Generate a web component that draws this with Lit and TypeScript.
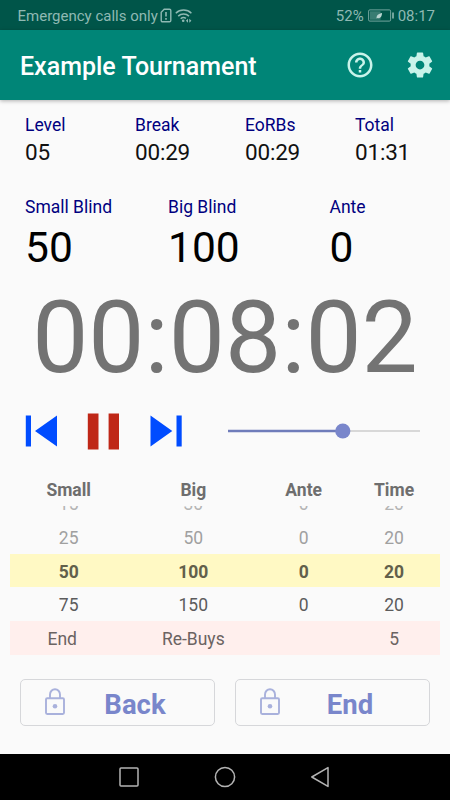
import { LitElement, html, css, svg } from "lit";
import { customElement } from "lit/decorators.js";
import { classMap } from "lit/directives/class-map.js";

interface Level {
  small: string;
  big: string;
  ante: string;
  time: string;
  kind: string;
}

const LEVELS: Level[] = [
  { small: "15", big: "30", ante: "0", time: "20", kind: "oldest" },
  { small: "25", big: "50", ante: "0", time: "20", kind: "past" },
  { small: "50", big: "100", ante: "0", time: "20", kind: "current" },
  { small: "75", big: "150", ante: "0", time: "20", kind: "next" },
  { small: "End", big: "Re-Buys", ante: "", time: "5", kind: "rest" },
];

const lock = svg`
  <path d="M6 10.5V6.5a5 5.3 0 0 1 10 0v4" fill="none" stroke="currentColor" stroke-width="1.9"/>
  <rect x="2" y="10.3" width="18" height="15.7" rx="1.2" fill="none" stroke="currentColor" stroke-width="1.9"/>
  <circle cx="11" cy="18.2" r="2.3" fill="currentColor"/>`;

@customElement("app-root")
export class AppRoot extends LitElement {
  static styles = css`
    :host {
      display: flex;
      flex-direction: column;
      width: 450px;
      height: 800px;
      overflow: hidden;
      background: #fafafa;
      font-family: Roboto, "Liberation Sans", sans-serif;
      color: #000;
    }
    * { box-sizing: border-box; }
    svg { display: block; flex: none; }
    .status {
      height: 30px;
      flex: none;
      display: flex;
      align-items: center;
      padding: 1px 15px 0 17.5px;
      background: #005549;
      color: #8fb9b3;
      font-size: 15px;
      line-height: 28px;
      white-space: nowrap;
    }
    .sim { margin-left: 2px; }
    .wifi { margin-left: 3px; }
    .pct { margin-left: auto; }
    .batt { margin: 0 3px 0 4px; }
    .bar {
      height: 70px;
      flex: none;
      display: flex;
      align-items: center;
      padding: 0 15px 0 20px;
      background: #008577;
      color: #fff;
      box-shadow: 0 1px 4px rgba(0, 0, 0, 0.3);
    }
    .title {
      flex: 1;
      font-size: 25px;
      font-weight: 500;
      line-height: 32px;
      padding-top: 4px;
    }
    .bar svg { color: #c9f3ea; }
    .gear { margin-left: 30px; }
    .stats {
      display: grid;
      grid-template-columns: repeat(4, 110px);
      padding: 13.3px 0 0 25px;
      height: 95.3px;
      flex: none;
    }
    .blinds {
      display: grid;
      grid-template-columns: 143px 161.5px 100px;
      padding-left: 25px;
      height: 80.5px;
      flex: none;
    }
    .label { font-size: 17.5px; line-height: 24px; color: #000080; }
    .value { font-size: 22.5px; line-height: 30px; color: #111; }
    .stats .value { letter-spacing: -0.2px; }
    .blinds .value { font-size: 42.5px; line-height: 57px; color: #000; }
    .timer {
      font-size: 100px;
      line-height: 124px;
      height: 124px;
      flex: none;
      text-align: center;
      color: #737373;
      white-space: nowrap;
    }
    .controls {
      display: flex;
      align-items: center;
      height: 62.5px;
      flex: none;
      padding-left: 25px;
    }
    .pause { margin: 0 31px 0 30px; }
    .slider { margin-left: 44.7px; }
    .row {
      display: grid;
      grid-template-columns: 117.4px 131.8px 89px 91.8px;
      margin: 0 10px;
      height: 33.75px;
      flex: none;
      line-height: 36px;
      text-align: center;
      font-size: 17.5px;
      color: #5c5c5c;
    }
    .head {
      height: 28px;
      line-height: 29px;
      margin-top: 13.7px;
      font-weight: 700;
      color: #6e6e6e;
    }
    .levels {
      display: flex;
      flex-direction: column;
      justify-content: flex-end;
      height: 149px;
      margin-top: 2px;
      flex: none;
      overflow: hidden;
    }
    .oldest { color: #b4b4b4; }
    .past { color: #a0a0a0; }
    .current { background: #fff9c4; color: #62604b; font-weight: 700; }
    .rest { background: #ffefed; color: #6b6362; }
    .rest .first { padding-right: 13px; }
    .buttons {
      display: flex;
      gap: 20px;
      padding: 24.5px 20px 0;
      flex: 1;
    }
    .button {
      width: 195px;
      height: 46.5px;
      display: flex;
      align-items: center;
      padding-left: 23px;
      border: 1px solid #d6d7da;
      border-radius: 5px;
      color: #7986cb;
      font-size: 27.5px;
      font-weight: 700;
      line-height: 46px;
    }
    .button svg { color: #a9b1dc; margin-top: -1px; }
    .caption { width: 138px; text-align: center; padding-top: 4px; }
    .nav {
      height: 46.5px;
      flex: none;
      display: flex;
      align-items: center;
      justify-content: center;
      gap: 74px;
      background: #000;
    }
  `;

  private stat(label: string, value: string) {
    return html`<div><div class="label">${label}</div><div class="value">${value}</div></div>`;
  }

  private button(text: string) {
    return html`<div class="button">
      <svg width="22" height="28" viewBox="0 0 22 28">${lock}</svg>
      <div class="caption">${text}</div>
    </div>`;
  }

  render() {
    return html`
      <div class="status">
        <span>Emergency calls only</span>
        <svg class="sim" width="12" height="15" viewBox="0 0 12 15" fill="none" stroke="currentColor">
          <path d="M4.2 1.2H9.5a1.3 1.3 0 0 1 1.3 1.3v10a1.3 1.3 0 0 1-1.3 1.3h-7a1.3 1.3 0 0 1-1.3-1.3V4.2z" stroke-width="1.4"/>
          <path d="M6 4v4.6M6 10v1.7" stroke-width="1.6"/>
        </svg>
        <svg class="wifi" width="18" height="15" viewBox="0 0 18 15" fill="none" stroke="currentColor" stroke-width="1.5">
          <path d="M.8 5.2a11.3 11.3 0 0 1 15.6 0M3.2 8.1a7.8 7.8 0 0 1 10.8 0M5.7 10.8a4.3 4.3 0 0 1 5.2-.5"/>
          <circle cx="8.2" cy="12.8" r="1.3" fill="currentColor" stroke="none"/>
          <path d="M13 10.7 10.9 12.7 13 14.7zM14.3 10.7l2.1 2-2.1 2z" fill="currentColor" stroke="none"/>
        </svg>
        <span class="pct">52%</span>
        <svg class="batt" width="27" height="13" viewBox="0 0 27 13">
          <rect x=".6" y=".9" width="22" height="11.2" rx="1.2" fill="none" stroke="currentColor" stroke-opacity=".8"/>
          <rect x="2" y="2.3" width="10.5" height="8.4" fill="currentColor" opacity=".4"/>
          <path d="M8.6 9.6c-.4-3.2 2-4.9 5.5-5.6-.2 3.4-1.4 5.6-4.5 5.1z" fill="#b9d5d1"/>
          <path d="M24.2 3.5h1.6v6h-1.6z" fill="currentColor"/>
        </svg>
        <span>08:17</span>
      </div>
      <div class="bar">
        <div class="title">Example Tournament</div>
        <svg width="30" height="30" viewBox="0 0 24 24" fill="currentColor">
          <path d="M11 18h2v-2h-2v2zm1-16C6.48 2 2 6.48 2 12s4.48 10 10 10 10-4.48 10-10S17.52 2 12 2zm0 18c-4.41 0-8-3.59-8-8s3.59-8 8-8 8 3.59 8 8-3.59 8-8 8zm0-14c-2.21 0-4 1.79-4 4h2c0-1.1.9-2 2-2s2 .9 2 2c0 2-3 1.75-3 5h2c0-2.25 3-2.5 3-5 0-2.21-1.79-4-4-4z"/>
        </svg>
        <svg class="gear" width="30" height="30" viewBox="0 0 24 24" fill="currentColor">
          <path d="M19.43 12.98c.04-.32.07-.64.07-.98s-.03-.66-.07-.98l2.11-1.65c.19-.15.24-.42.12-.64l-2-3.46c-.12-.22-.39-.3-.61-.22l-2.49 1c-.52-.4-1.08-.73-1.69-.98l-.38-2.65C14.46 2.18 14.25 2 14 2h-4c-.25 0-.46.18-.49.42l-.38 2.65c-.61.25-1.17.59-1.69.98l-2.49-1c-.23-.09-.49 0-.61.22l-2 3.46c-.13.22-.07.49.12.64l2.11 1.65c-.04.32-.07.65-.07.98s.03.66.07.98l-2.11 1.65c-.19.15-.24.42-.12.64l2 3.46c.12.22.39.3.61.22l2.49-1c.52.4 1.08.73 1.69.98l.38 2.65c.03.24.24.42.49.42h4c.25 0 .46-.18.49-.42l.38-2.65c.61-.25 1.17-.59 1.69-.98l2.49 1c.23.09.49 0 .61-.22l2-3.46c.12-.22.07-.49-.12-.64l-2.11-1.65zM12 15.5c-1.93 0-3.5-1.57-3.5-3.5s1.57-3.5 3.5-3.5 3.5 1.57 3.5 3.5-1.57 3.5-3.5 3.5z"/>
        </svg>
      </div>
      <div class="stats">
        ${this.stat("Level", "05")} ${this.stat("Break", "00:29")}
        ${this.stat("EoRBs", "00:29")} ${this.stat("Total", "01:31")}
      </div>
      <div class="blinds">
        ${this.stat("Small Blind", "50")} ${this.stat("Big Blind", "100")} ${this.stat("Ante", "0")}
      </div>
      <div class="timer">00:08:02</div>
      <div class="controls">
        <svg width="32" height="32" viewBox="0 0 32 32" fill="#004cff"><path d="M.8.5h5.2v31H.8zM32 .5v31L10 16z"/></svg>
        <svg class="pause" width="32" height="37" viewBox="0 0 32 37" fill="#bf2717"><path d="M.8.5h10.7v36H.8zM21.6.5H32v36H21.6z"/></svg>
        <svg width="32" height="32" viewBox="0 0 32 32" fill="#004cff"><path d="M.5.5v31L22.3 16zM26.5.5h5.2v31h-5.2z"/></svg>
        <svg class="slider" width="194" height="16" viewBox="0 0 194 16">
          <path d="M1 7h192v2H1z" fill="#d8d8d8"/>
          <path d="M1 6.8h115v2.4H1z" fill="#6f7cba"/>
          <circle cx="115.8" cy="8" r="7.6" fill="#7986cb"/>
        </svg>
      </div>
      <div class="row head"><span>Small</span><span>Big</span><span>Ante</span><span>Time</span></div>
      <div class="levels">
        ${LEVELS.map(
          (l) => html`<div class=${classMap({ row: true, [l.kind]: true })}>
            <span class="first">${l.small}</span><span>${l.big}</span><span>${l.ante}</span><span>${l.time}</span>
          </div>`
        )}
      </div>
      <div class="buttons">${this.button("Back")}${this.button("End")}</div>
      <div class="nav">
        <svg width="22" height="22" viewBox="0 0 22 22" fill="none" stroke="#b4b4b4" stroke-width="1.5"><rect x="2" y="2" width="18" height="18" rx="1"/></svg>
        <svg width="22" height="22" viewBox="0 0 22 22" fill="none" stroke="#b4b4b4" stroke-width="1.5"><circle cx="11" cy="11" r="9.6"/></svg>
        <svg width="22" height="22" viewBox="0 0 22 22" fill="none" stroke="#b4b4b4" stroke-width="1.5" stroke-linejoin="round"><path d="M18 1.6v18.8L1.8 11z"/></svg>
      </div>
    `;
  }
}
